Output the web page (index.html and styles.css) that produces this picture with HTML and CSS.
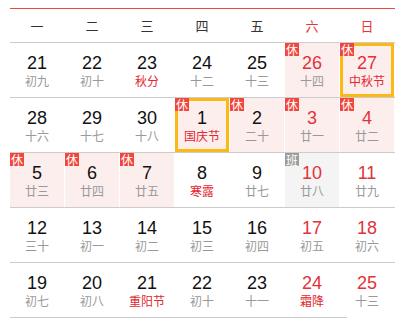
FILE: index.html
```html
<!DOCTYPE html>
<html lang="zh-CN">
<head>
<meta charset="utf-8">
<title>日历</title>
<link rel="stylesheet" href="styles.css">
</head>
<body>
<div class="cal">
  <div class="head">
    <div class="wd">一</div><div class="wd">二</div><div class="wd">三</div><div class="wd">四</div><div class="wd">五</div><div class="wd we">六</div><div class="wd we">日</div>
  </div>
  <div class="row">
    <div class="cell"><div class="num">21</div><div class="lun">初九</div></div>
    <div class="cell"><div class="num">22</div><div class="lun">初十</div></div>
    <div class="cell"><div class="num">23</div><div class="lun fest">秋分</div></div>
    <div class="cell"><div class="num">24</div><div class="lun">十二</div></div>
    <div class="cell"><div class="num">25</div><div class="lun">十三</div></div>
    <div class="cell rest"><span class="badge">休</span><div class="num red">26</div><div class="lun">十四</div></div>
    <div class="cell rest sel"><span class="badge">休</span><div class="num red">27</div><div class="lun fest">中秋节</div></div>
  </div>
  <div class="row">
    <div class="cell"><div class="num">28</div><div class="lun">十六</div></div>
    <div class="cell"><div class="num">29</div><div class="lun">十七</div></div>
    <div class="cell"><div class="num">30</div><div class="lun">十八</div></div>
    <div class="cell rest sel"><span class="badge">休</span><div class="num">1</div><div class="lun fest">国庆节</div></div>
    <div class="cell rest"><span class="badge">休</span><div class="num">2</div><div class="lun">二十</div></div>
    <div class="cell rest"><span class="badge">休</span><div class="num red">3</div><div class="lun">廿一</div></div>
    <div class="cell rest"><span class="badge">休</span><div class="num red">4</div><div class="lun">廿二</div></div>
  </div>
  <div class="row">
    <div class="cell rest"><span class="badge">休</span><div class="num">5</div><div class="lun">廿三</div></div>
    <div class="cell rest"><span class="badge">休</span><div class="num">6</div><div class="lun">廿四</div></div>
    <div class="cell rest"><span class="badge">休</span><div class="num">7</div><div class="lun">廿五</div></div>
    <div class="cell"><div class="num">8</div><div class="lun fest">寒露</div></div>
    <div class="cell"><div class="num">9</div><div class="lun">廿七</div></div>
    <div class="cell work"><span class="badge gray">班</span><div class="num red">10</div><div class="lun">廿八</div></div>
    <div class="cell"><div class="num red">11</div><div class="lun">廿九</div></div>
  </div>
  <div class="row">
    <div class="cell"><div class="num">12</div><div class="lun">三十</div></div>
    <div class="cell"><div class="num">13</div><div class="lun">初一</div></div>
    <div class="cell"><div class="num">14</div><div class="lun">初二</div></div>
    <div class="cell"><div class="num">15</div><div class="lun">初三</div></div>
    <div class="cell"><div class="num">16</div><div class="lun">初四</div></div>
    <div class="cell"><div class="num red">17</div><div class="lun">初五</div></div>
    <div class="cell"><div class="num red">18</div><div class="lun">初六</div></div>
  </div>
  <div class="row last">
    <div class="cell"><div class="num">19</div><div class="lun">初七</div></div>
    <div class="cell"><div class="num">20</div><div class="lun">初八</div></div>
    <div class="cell"><div class="num">21</div><div class="lun fest">重阳节</div></div>
    <div class="cell"><div class="num">22</div><div class="lun">初十</div></div>
    <div class="cell"><div class="num">23</div><div class="lun">十一</div></div>
    <div class="cell"><div class="num red">24</div><div class="lun fest">霜降</div></div>
    <div class="cell"><div class="num red">25</div><div class="lun">十三</div></div>
  </div>
  <div class="tail"></div>
</div>
</body>
</html>
```

FILE: styles.css
```css
html, body {
  margin: 0;
  padding: 0;
  background: #fff;
}
body {
  font-family: "Liberation Sans", "Noto Sans CJK SC", sans-serif;
}
.cal {
  margin: 8px 0 0 10px;
  width: 385px;
}
.head {
  display: grid;
  grid-template-columns: repeat(7, 55px);
  height: 33px;
  border-top: 1px solid #f2463c;
  border-bottom: 1px solid #cccccc;
}
.wd {
  width: 54px;
  text-align: center;
  font-family: "Noto Sans CJK SC", sans-serif;
  font-size: 13px;
  line-height: 33px;
  color: #333;
}
.wd.we {
  color: #e8333a;
}
.row {
  display: grid;
  grid-template-columns: repeat(7, 55px);
  border-bottom: 1px solid #cccccc;
}
.row.last {
  border-bottom: none;
}
.tail {
  width: 337px;
  height: 1px;
  background: #cccccc;
}
.cell {
  position: relative;
  width: 54px;
  height: 54px;
  box-sizing: border-box;
  padding-top: 10px;
  text-align: center;
}
.cell.rest {
  background: #fdeeee;
}
.cell.work {
  background: #f4f4f4;
}
.cell.sel {
  box-shadow: inset 0 0 0 3px #fdb913;
}
.num {
  font-size: 18px;
  line-height: 20px;
  color: #111;
}
.num.red {
  color: #e3323a;
}
.lun {
  margin-top: 1px;
  font-family: "Noto Sans CJK SC", sans-serif;
  font-size: 12px;
  line-height: 14px;
  color: #999;
}
.lun.fest {
  color: #e3272f;
}
.badge {
  position: absolute;
  left: 0;
  top: 0;
  width: 14px;
  height: 13px;
  background: #f2463c;
  color: #fff;
  font-family: "Noto Sans CJK SC", sans-serif;
  font-size: 12px;
  line-height: 13px;
  text-align: center;
}
.badge.gray {
  background: #9c9c9c;
}
```
